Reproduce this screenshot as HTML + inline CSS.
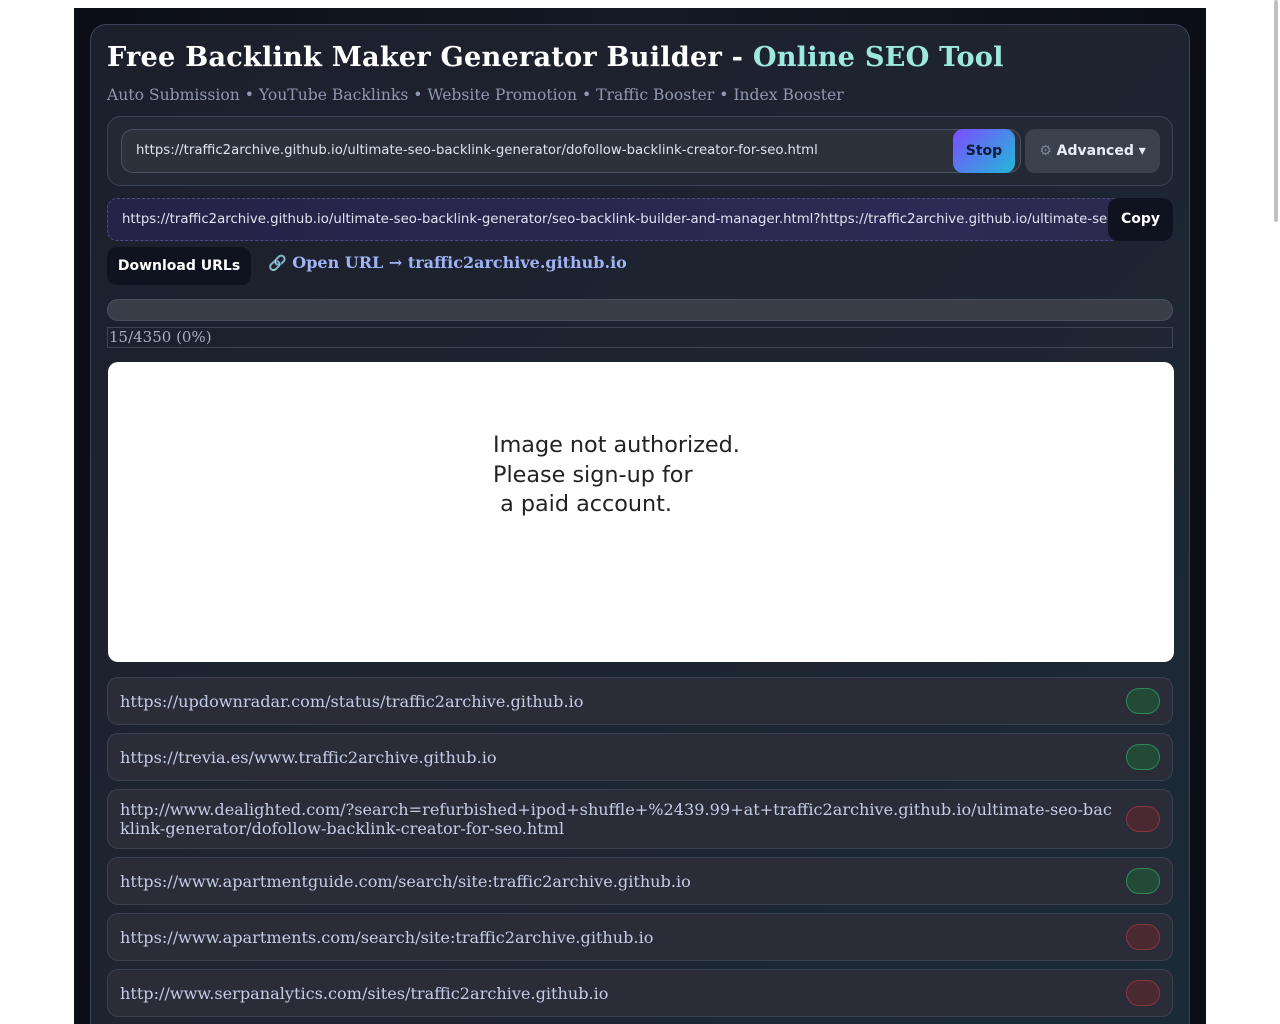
<!DOCTYPE html>
<html><head><meta charset="utf-8"><style>
*{box-sizing:border-box;margin:0;padding:0}
html{height:1024px;overflow:hidden}
body{width:1280px;height:1024px;background:#fff;overflow:hidden;font-family:"DejaVu Serif",serif;position:relative}
.outer{position:absolute;left:74px;top:8px;width:1132px;height:1016px;overflow:hidden;background:linear-gradient(90deg,#0b0e16,#141a26 50%,#0b0e16);}
.card{position:absolute;left:16px;top:16px;width:1100px;height:1000px;border:1px solid #3a4358;border-bottom:none;border-radius:16px 16px 0 0;background:linear-gradient(135deg,#1c1f2c 0%,#1f2431 50%,#1a2a36 100%)}
.abs{position:absolute}
h1{position:absolute;left:16px;top:16px;font-size:27.2px;font-weight:bold;color:#fff;white-space:nowrap;letter-spacing:0.2px}
h1 span{color:#9ee9de}
.sub{left:16px;top:61px;font-size:15.6px;color:#8f98b0;white-space:nowrap}
.panel{left:16px;top:91px;width:1066px;height:70px;border:1px solid #3c4558;border-radius:14px;background:#222834}
.inp{left:13px;top:12px;width:900px;height:44px;border:1px solid #4a5264;border-radius:12px;background:#2c313c;font-family:"DejaVu Sans",sans-serif;font-size:13.3px;color:#dde2ee;padding:13px 14px;white-space:nowrap}
.stop{left:845px;top:12px;width:62px;height:44px;border-radius:10px;background:linear-gradient(135deg,#7c4dff,#22b8d8);font-family:"DejaVu Sans",sans-serif;font-weight:bold;font-size:14px;color:#111a3a;text-align:center;line-height:44px}
.adv{left:917px;top:12px;width:135px;height:44px;border-radius:10px;background:#38414c;font-family:"DejaVu Sans",sans-serif;font-weight:bold;font-size:14px;color:#e8ecf5;text-align:center;line-height:44px}
.out{left:16px;top:173px;width:1066px;height:43px;border:1px dashed #4c4a86;border-radius:10px;background:linear-gradient(90deg,#252347,#2d2a55 80%,#2a2a4a);overflow:hidden;font-family:"DejaVu Sans",sans-serif;font-size:13.3px;color:#dfe2f0;white-space:nowrap;padding:13px 14px}
.copy{left:1017px;top:173px;width:65px;height:43px;border-radius:10px;background:#0f1320;font-family:"DejaVu Sans",sans-serif;font-weight:bold;font-size:14px;color:#fff;text-align:center;line-height:43px}
.dl{left:16px;top:222px;width:144px;height:38px;border-radius:10px;background:#0f1320;font-family:"DejaVu Sans",sans-serif;font-weight:bold;font-size:14px;color:#fff;text-align:center;line-height:38px}
.open{left:177px;top:228px;font-size:16px;font-weight:bold;color:#9fb3f5;white-space:nowrap}
.open i{font-style:normal;color:#8a8fa0;font-weight:normal;font-size:15px}
.prog{left:16px;top:274px;width:1066px;height:22px;border:1px solid #4a5060;border-radius:11px;background:#393e49}
.ptxt{left:16px;top:302px;width:1066px;height:21px;border:1px solid #3d4352;font-size:15px;color:#a8aec0;line-height:19px;padding-left:1px}
.img{left:17px;top:337px;width:1066px;height:300px;background:#fff;border-radius:10px}
.img div{position:absolute;left:385px;top:69px;font-family:"DejaVu Sans",sans-serif;font-size:22.3px;color:#222;line-height:29.5px;white-space:pre}
.row{left:16px;width:1066px;height:48px;border:1px solid #3b4150;border-radius:11px;background:#2a2d38;font-size:16.1px;color:#c4cce6;padding:10px 12px;line-height:19px;display:flex;align-items:center}
.pill{position:absolute;right:12px;top:10px;width:34px;height:26px;border-radius:13px}
.g{background:#224a36;border:1px solid #2f8a55}
.r{background:#4a2a30;border:1px solid #8a3440}
.sb{position:absolute;left:1274px;top:0;width:4px;height:222px;background:#c1c1c1;border-radius:2px}
</style></head><body>
<div class="outer"><div class="card">
<h1>Free Backlink Maker Generator Builder - <span>Online SEO Tool</span></h1>
<div class="abs sub">Auto Submission • YouTube Backlinks • Website Promotion • Traffic Booster • Index Booster</div>
<div class="abs panel">
<div class="abs inp">https://traffic2archive.github.io/ultimate-seo-backlink-generator/dofollow-backlink-creator-for-seo.html</div>
<div class="abs stop">Stop</div>
<div class="abs adv"><span style="color:#7c8594">⚙</span> Advanced ▾</div>
</div>
<div class="abs out">https://traffic2archive.github.io/ultimate-seo-backlink-generator/seo-backlink-builder-and-manager.html?https://traffic2archive.github.io/ultimate-seo-backlink-generator/</div>
<div class="abs copy">Copy</div>
<div class="abs dl">Download URLs</div>
<div class="abs open"><i>🔗</i> Open URL → traffic2archive.github.io</div>
<div class="abs prog"></div>
<div class="abs ptxt">15/4350 (0%)</div>
<div class="abs img"><div>Image not authorized.
Please sign-up for
 a paid account.</div></div>
<div class="abs row" style="top:652px">https://updownradar.com/status/traffic2archive.github.io<span class="pill g"></span></div>
<div class="abs row" style="top:708px">https://trevia.es/www.traffic2archive.github.io<span class="pill g"></span></div>
<div class="abs row" style="top:764px;height:60px;padding-right:60px;word-break:break-all">http://www.dealighted.com/?search=refurbished+ipod+shuffle+%2439.99+at+traffic2archive.github.io/ultimate-seo-backlink-generator/dofollow-backlink-creator-for-seo.html<span class="pill r" style="top:16px"></span></div>
<div class="abs row" style="top:832px">https://www.apartmentguide.com/search/site:traffic2archive.github.io<span class="pill g"></span></div>
<div class="abs row" style="top:888px">https://www.apartments.com/search/site:traffic2archive.github.io<span class="pill r"></span></div>
<div class="abs row" style="top:944px">http://www.serpanalytics.com/sites/traffic2archive.github.io<span class="pill r"></span></div>
</div></div>
<div class="sb"></div>
</body></html>
